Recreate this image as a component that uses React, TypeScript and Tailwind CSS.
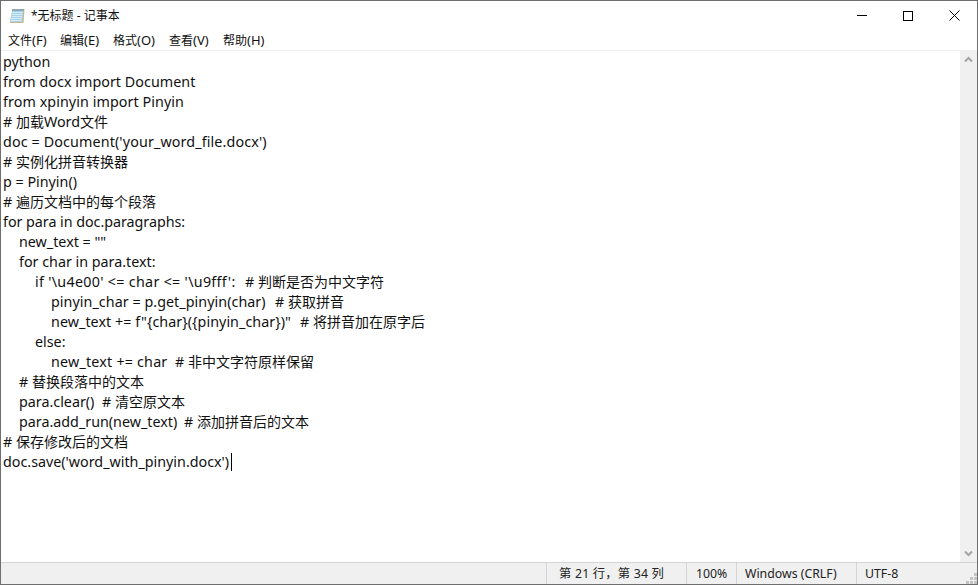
import type { ReactNode } from "react";

const FONT = '"Noto Sans", "Noto Sans CJK SC", sans-serif';

type Line = { level: string; code: string; note?: string; codeClass?: string; track?: string };

const lines: Line[] = [
  { level: "pl-0", code: "python" },
  { level: "pl-0", code: "from docx import Document", track: "tracking-[0.04px]" },
  { level: "pl-0", code: "from xpinyin import Pinyin", track: "tracking-[0.08px]" },
  { level: "pl-0", code: "# 加载Word文件" },
  { level: "pl-0", code: "doc = Document('your_word_file.docx')", track: "tracking-[0.13px]" },
  { level: "pl-0", code: "# 实例化拼音转换器" },
  { level: "pl-0", code: "p = Pinyin()" },
  { level: "pl-0", code: "# 遍历文档中的每个段落" },
  { level: "pl-0", code: "for para in doc.paragraphs:", track: "tracking-[-0.03px]" },
  { level: "pl-4", code: 'new_text = ""' },
  { level: "pl-4", code: "for char in para.text:" },
  { level: "pl-8", code: "if '\\u4e00' <= char <= '\\u9fff':", note: "# 判断是否为中文字符", codeClass: "w-[210px] tracking-[0.3px]" },
  { level: "pl-12", code: "pinyin_char = p.get_pinyin(char)", note: "# 获取拼音", codeClass: "w-[224px] tracking-[0.05px]" },
  { level: "pl-12", code: 'new_text += f"{char}({pinyin_char})"', note: "# 将拼音加在原字后", codeClass: "w-[249px] tracking-[0.05px]" },
  { level: "pl-8", code: "else:" },
  { level: "pl-12", code: "new_text += char", note: "# 非中文字符原样保留", codeClass: "w-[124px] tracking-[0.2px]" },
  { level: "pl-4", code: "# 替换段落中的文本" },
  { level: "pl-4", code: "para.clear()", note: "# 清空原文本", codeClass: "w-[83px]" },
  { level: "pl-4", code: "para.add_run(new_text)", note: "# 添加拼音后的文本", codeClass: "w-[165px]" },
  { level: "pl-0", code: "# 保存修改后的文档" },
  { level: "pl-0", code: "doc.save('word_with_pinyin.docx')" },
];

function Mixed({ text, cjk }: { text: string; cjk: string }) {
  const parts = text.split(/([\u4e00-\u9fff，]+)/);
  return (
    <>
      {parts.map((part, i) =>
        i % 2 === 1 ? (
          <span key={i} className={cjk}>
            {part}
          </span>
        ) : (
          part
        ),
      )}
    </>
  );
}

function NotepadIcon() {
  return (
    <svg width="17" height="17" viewBox="0 0 17 17" className="shrink-0">
      <path d="M3.5 2 L15.5 2 L14.5 16 L1 16 Z" fill="#c9b48c" />
      <path d="M3.5 2 L14.5 2 L13.2 15 L1 15 Z" fill="#a6d3e8" />
      <path d="M3.1 5.5H13.6M2.8 7.5H13.4M2.5 9.5H13.2M2.2 11.5H13M1.9 13.5H12.9" stroke="#d2ebf6" />
      <path d="M3.5 3 H14.4" stroke="#6d7f88" strokeWidth="2" strokeDasharray="1 1" />
    </svg>
  );
}

function Menu({ label, className }: { label: string; className: string }) {
  return (
    <span className={`text-[13px] leading-5 text-[#111] ${className}`}>
      <Mixed text={label} cjk="text-[12px]" />
    </span>
  );
}

function StatusCell({ className, children }: { className: string; children: ReactNode }) {
  return (
    <div className={`h-full border-l border-[#d4d4d4] text-[12.3px] leading-[21px] whitespace-pre text-[#222] ${className}`}>
      {children}
    </div>
  );
}

export default function App() {
  return (
    <div
      className="flex h-[585px] w-[978px] flex-col overflow-hidden border border-[#6e6e6e] bg-white"
      style={{ fontFamily: FONT }}
    >
      <div className="flex h-[29px] shrink-0 items-center justify-between">
        <div className="flex items-center gap-[5px] pl-[8px]">
          <NotepadIcon />
          <span className="text-[12px] text-[#111]">*无标题 - 记事本</span>
        </div>
        <div className="flex h-full items-center">
          <div className="flex h-full w-[46px] items-center justify-center">
            <div className="h-px w-[10px] bg-black" />
          </div>
          <div className="flex h-full w-[46px] items-center justify-center">
            <div className="h-[10px] w-[10px] border border-black" />
          </div>
          <div className="flex h-full w-[46px] items-center justify-center">
            <svg width="11" height="11" viewBox="0 0 11 11">
              <path d="M0.5 0.5L10.5 10.5M10.5 0.5L0.5 10.5" stroke="#000" strokeWidth="1" />
            </svg>
          </div>
        </div>
      </div>

      <div className="flex h-[20px] shrink-0 items-center pl-[7px] pt-px">
        <Menu label="文件(F)" className="w-[52px]" />
        <Menu label="编辑(E)" className="w-[53px]" />
        <Menu label="格式(O)" className="w-[56px]" />
        <Menu label="查看(V)" className="w-[54px]" />
        <Menu label="帮助(H)" className="w-[54px]" />
      </div>

      <div className="flex min-h-0 flex-1 border-t border-[#f0f0f0]">
        <div className="min-w-0 flex-1 pl-[2px] pt-px">
          {lines.map((line, i) => (
            <div key={i} className={`h-5 whitespace-pre text-[14.3px] leading-5 text-[#111] ${line.level} ${line.track ?? ""}`}>
              <span className={line.note ? `inline-block ${line.codeClass}` : ""}>
                <Mixed text={line.code} cjk="text-[14px]" />
              </span>
              {line.note && <Mixed text={line.note} cjk="text-[14px]" />}
              {i === lines.length - 1 && (
                <span className="ml-[2px] inline-block h-[18px] w-px bg-black align-[-4px]" />
              )}
            </div>
          ))}
        </div>
        <div className="flex w-[17px] shrink-0 flex-col justify-between bg-[#f0f0f0]">
          <div className="flex h-[17px] items-center justify-center">
            <svg width="9" height="7" viewBox="0 0 9 7">
              <path d="M1 5.5L4.5 2L8 5.5" fill="none" stroke="#a3a3a3" strokeWidth="2" />
            </svg>
          </div>
          <div className="flex h-[17px] items-center justify-center">
            <svg width="9" height="7" viewBox="0 0 9 7">
              <path d="M1 1.5L4.5 5L8 1.5" fill="none" stroke="#a3a3a3" strokeWidth="2" />
            </svg>
          </div>
        </div>
      </div>

      <div className="relative flex h-[22px] shrink-0 justify-end border-t border-[#d4d4d4] bg-[#f0f0f0]">
        <StatusCell className="w-[140px] pl-[12px] tracking-[0.2px]">第 21 行，第 34 列</StatusCell>
        <StatusCell className="w-[50px] pl-[9px]">100%</StatusCell>
        <StatusCell className="w-[120px] pl-[8px]">Windows (CRLF)</StatusCell>
        <StatusCell className="w-[121px] pl-[8px]">UTF-8</StatusCell>
        <svg width="11" height="11" viewBox="0 0 11 11" className="absolute right-0 bottom-0">
          <path d="M8 0h3v3h-3zM4 4h3v3h-3zM8 4h3v3h-3zM0 8h3v3h-3zM4 8h3v3h-3zM8 8h3v3h-3z" fill="#c4c4c4" />
        </svg>
      </div>
    </div>
  );
}
